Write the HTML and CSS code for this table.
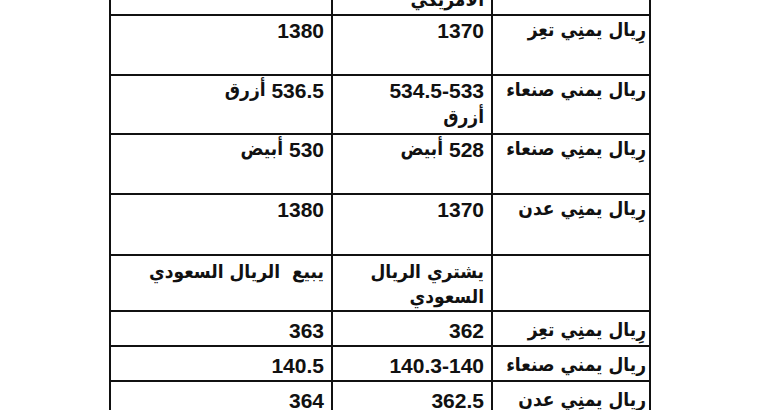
FILE: index.html
```html
<!DOCTYPE html>
<html lang="ar">
<head>
<meta charset="utf-8">
<title>أسعار الصرف</title>
<link rel="stylesheet" href="styles.css">
</head>
<body>
<div class="page">
  <table class="rates" dir="rtl">
    <colgroup>
      <col class="col-label">
      <col class="col-buy">
      <col class="col-sell">
    </colgroup>
    <tbody>
      <tr class="row-head">
        <td class="label"></td>
        <td><span class="ar">يشتري الدولار<br>الأمريكي</span></td>
        <td><span class="ar">يبيع الدولار الأمريكي</span></td>
      </tr>
      <tr class="row-60">
        <td class="label"><span class="ar">رِيال يمنِي تعِز</span></td>
        <td>1370</td>
        <td>1380</td>
      </tr>
      <tr class="row-59">
        <td class="label"><span class="ar">ريال يمني صنعاء</span></td>
        <td>534.5-533<br><span class="ar">أزرق</span></td>
        <td>536.5 <span class="ar">أزرق</span></td>
      </tr>
      <tr class="row-60">
        <td class="label"><span class="ar">رِيال يمنِي صنعاء</span></td>
        <td>528 <span class="ar">أبيض</span></td>
        <td>530 <span class="ar">أبيض</span></td>
      </tr>
      <tr class="row-61">
        <td class="label"><span class="ar">رِيال يمنِي عدن</span></td>
        <td>1370</td>
        <td>1380</td>
      </tr>
      <tr class="row-head row-head-sar">
        <td class="label"></td>
        <td><span class="ar">يشتري الريال<br>السعودي</span></td>
        <td><span class="ar">يبيع&nbsp; الريال السعودي</span></td>
      </tr>
      <tr class="row-short">
        <td class="label"><span class="ar">رِيال يمنِي تعِز</span></td>
        <td>362</td>
        <td>363</td>
      </tr>
      <tr class="row-short">
        <td class="label"><span class="ar">ريال يمني صنعاء</span></td>
        <td>140.3-140</td>
        <td>140.5</td>
      </tr>
      <tr class="row-short">
        <td class="label"><span class="ar">رِيال يمنِي عدن</span></td>
        <td>362.5</td>
        <td>364</td>
      </tr>
    </tbody>
  </table>
</div>
</body>
</html>
```
FILE: styles.css
```css
html, body {
  margin: 0;
  padding: 0;
  background: #ffffff;
}

body {
  font-family: "Liberation Sans", "DejaVu Sans Condensed", "DejaVu Sans", sans-serif;
  font-weight: bold;
  color: #111111;
}

.page {
  height: 410px;
  overflow: hidden;
}

.rates {
  direction: rtl;
  border-collapse: collapse;
  table-layout: fixed;
  width: 540px;
  margin: -43px auto 0;
}

.col-label { width: 158px; }
.col-buy { width: 160px; }
.col-sell { width: 222px; }

.rates td {
  border: 2px solid #111111;
  vertical-align: top;
  text-align: right;
  padding: 1px 7px 0 7px;
  font-size: 21px;
  line-height: 27px;
  white-space: nowrap;
}

.rates td.label {
  padding-right: 3px;
}

.ar {
  font-family: "DejaVu Sans Condensed", "DejaVu Sans", sans-serif;
  font-size: 19px;
  line-height: 22px;
  vertical-align: 2px;
}

.row-head { height: 57px; }
.row-head-sar { height: 56px; }
.row-head td {
  padding-top: 4px;
  line-height: 25px;
}
.row-59 { height: 59px; }
.row-60 { height: 60px; }
.row-61 { height: 61px; }
.row-short { height: 35px; }

.row-short td {
  padding-top: 5px;
}
```
